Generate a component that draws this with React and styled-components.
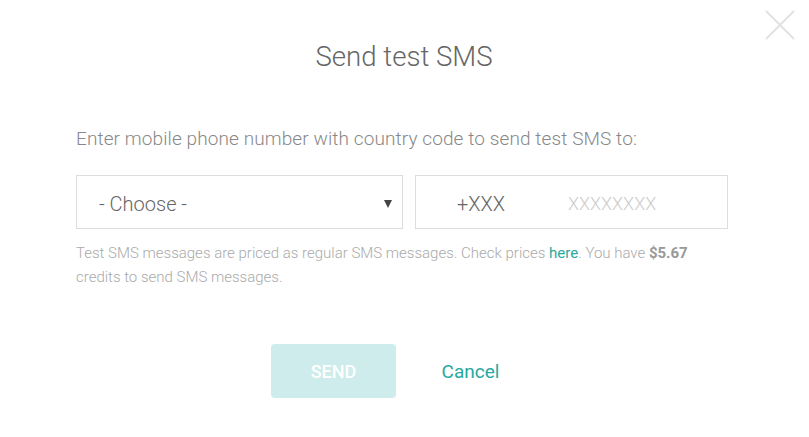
import React, { useState } from "react";
import styled, { createGlobalStyle } from "styled-components";

const GlobalStyle = createGlobalStyle`
  html, body {
    margin: 0;
    padding: 0;
    background: #fff;
  }
  body {
    font-family: Roboto, "Open Sans", sans-serif;
  }
  * {
    box-sizing: border-box;
  }
`;

const App = () => {
  const [phone, setPhone] = useState("");

  return (
    <>
      <GlobalStyle />
      <Modal>
        <CloseButton aria-label="Close">
          <svg width="32" height="32" viewBox="0 0 32 32">
            <path d="M2 2 L30 30 M30 2 L2 30" stroke="#e2e2e2" strokeWidth="2" fill="none" />
          </svg>
        </CloseButton>
        <Title>Send test SMS</Title>
        <Lead>Enter mobile phone number with country code to send test SMS to:</Lead>
        <InputRow>
          <SelectBox>
            <span>- Choose -</span>
            <Caret />
          </SelectBox>
          <PhoneBox>
            <Prefix>+XXX</Prefix>
            <PhoneInput
              placeholder="XXXXXXXX"
              value={phone}
              onChange={(e) => setPhone(e.target.value)}
            />
          </PhoneBox>
        </InputRow>
        <Help>
          Test SMS messages are priced as regular SMS messages. Check prices{" "}
          <HelpLink href="#">here</HelpLink>. You have <strong>$5.67</strong>{" "}
          credits to send SMS messages.
        </Help>
        <Actions>
          <SendButton disabled>SEND</SendButton>
          <CancelButton>Cancel</CancelButton>
        </Actions>
      </Modal>
    </>
  );
};

export default App;

const Modal = styled.div`
  position: relative;
  width: 809px;
  height: 437px;
  padding: 40px 81px 0 76px;
  display: flex;
  flex-direction: column;
`;

const CloseButton = styled.button`
  position: absolute;
  top: 9px;
  right: 13px;
  width: 32px;
  height: 32px;
  padding: 0;
  border: none;
  background: none;
  cursor: pointer;

  svg {
    display: block;
  }
`;

const Title = styled.h2`
  margin: 0;
  font-size: 27.6px;
  line-height: 34px;
  font-weight: 300;
  color: #666;
  text-align: center;
  padding-left: 4px;
`;

const Lead = styled.p`
  margin: 53px 0 0;
  font-size: 19px;
  letter-spacing: 0.1px;
  line-height: 24px;
  font-weight: 300;
  color: #888;
`;

const InputRow = styled.div`
  margin-top: 24px;
  display: grid;
  grid-template-columns: 327px 313px;
  gap: 12px;
`;

const Field = styled.div`
  height: 54px;
  border: 1px solid #ddd;
  padding-top: 3px;
  display: flex;
  align-items: center;
  background: #fff;
`;

const SelectBox = styled(Field)`
  padding-left: 22px;
  padding-right: 10px;
  justify-content: space-between;
  font-size: 20px;
  font-weight: 300;
  color: #666;
  cursor: pointer;
`;

const Caret = styled.span`
  width: 0;
  height: 0;
  border-left: 4px solid transparent;
  border-right: 4px solid transparent;
  border-top: 8px solid #444;
`;

const PhoneBox = styled(Field)`
  padding-left: 41px;
`;

const Prefix = styled.span`
  width: 111px;
  font-size: 20px;
  font-weight: 300;
  color: #666;
`;

const PhoneInput = styled.input`
  flex: 1;
  min-width: 0;
  border: none;
  outline: none;
  padding: 0;
  font-family: Roboto, sans-serif;
  font-size: 18px;
  font-weight: 300;
  color: #666;

  &::placeholder {
    color: #ccc;
  }
`;

const Help = styled.p`
  margin: 12px 0 0;
  font-size: 15px;
  line-height: 24px;
  font-weight: 300;
  color: #aaa;

  strong {
    font-weight: 700;
    color: #999;
  }
`;

const HelpLink = styled.a`
  color: #2aa9a1;
  font-weight: 400;
  text-decoration: none;
`;

const Actions = styled.div`
  margin-top: 55px;
  display: flex;
  justify-content: center;
  gap: 12px;
`;

const ActionButton = styled.button`
  width: 125px;
  height: 54px;
  border: none;
  border-radius: 4px;
  font-family: Roboto, sans-serif;
  cursor: pointer;
`;

const SendButton = styled(ActionButton)`
  background: #cdeceb;
  color: #fff;
  font-size: 18px;
  font-weight: 500;

  &:disabled {
    cursor: default;
  }
`;

const CancelButton = styled(ActionButton)`
  background: none;
  color: #26a9a0;
  font-size: 19px;
  font-weight: 400;
`;
